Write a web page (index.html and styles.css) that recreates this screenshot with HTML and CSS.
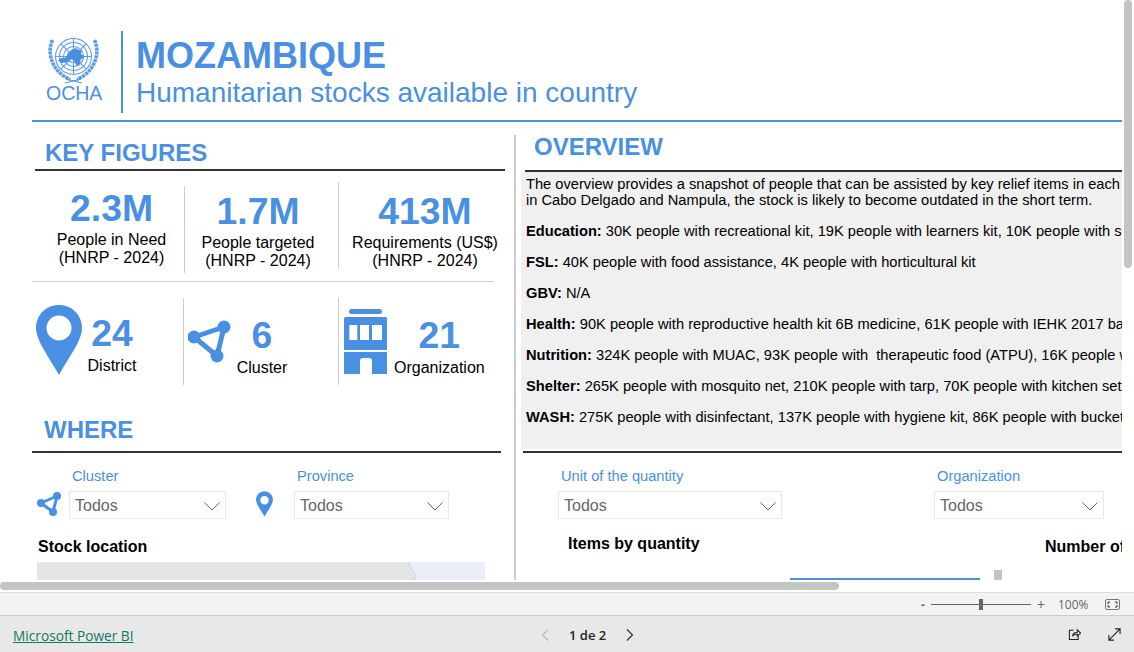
FILE: index.html
```html
<!DOCTYPE html>
<html lang="en">
<head>
<meta charset="utf-8">
<title>Mozambique - Humanitarian stocks</title>
<link rel="stylesheet" href="styles.css">
</head>
<body>
<main class="canvas">
  <header class="head">
    <div class="logo">
      <svg class="emblem" viewBox="0 0 52 46" width="52" height="46" aria-hidden="true">
        <g fill="none" stroke="#5e9ee6" stroke-width="1.100">
          <circle cx="25.500" cy="18.500" r="18"/><circle cx="25.500" cy="18.500" r="14"/><circle cx="25.500" cy="18.500" r="10"/><circle cx="25.500" cy="18.500" r="6"/>
          <path d="M25.500 .5V36.500M7.500 18.500H43.500M12.800 5.800 38.200 31.200M38.200 5.800 12.800 31.200"/>
        </g>
        <path fill="#4a90e2" d="M23 12l5-2 3 2 3 0-1 4 3 2 0 2-3 1-1 5-3 2-2-3-1-3-4-1-2 3-6 1-4-2 3-3 4 0 2-2 1-3 3-1z"/>
        <g fill="none" stroke="#5c9de6" stroke-width="3.600" stroke-dasharray="3.200 .7">
          <path d="M4.500 2C-2 16 5 34 22 41.500"/><path d="M46.500 2C53 16 46 34 29 41.500"/>
        </g>
        <path fill="none" stroke="#4a90e2" stroke-width="1" d="M17 45 33 41M34 45 18 41"/>
      </svg>
      <span class="ocha">OCHA</span>
    </div>
    <div class="titles">
      <h1>MOZAMBIQUE</h1>
      <p>Humanitarian stocks available in country</p>
    </div>
  </header>
  <div class="columns">
    <section class="left">
      <h2 class="sec-key">KEY FIGURES</h2>
      <div class="kpis">
        <div class="kpi kpi-a"><strong>2.3M</strong><span>People in Need<br>(HNRP - 2024)</span></div>
        <div class="kpi kpi-b"><strong>1.7M</strong><span>People targeted<br>(HNRP - 2024)</span></div>
        <div class="kpi kpi-c"><strong>413M</strong><span>Requirements (US$)<br>(HNRP - 2024)</span></div>
      </div>
      <div class="counts">
        <div class="count count-a">
          <svg viewBox="0 0 46 70" width="46" height="70" aria-hidden="true"><path fill="#4a90e2" fill-rule="evenodd" d="M23 0C10 0 0 10 0 23 0 36 15 55 23 70 31 55 46 36 46 23 46 10 36 0 23 0ZM23 10.500A12.500 12.500 0 1 1 23 35.500 12.500 12.500 0 0 1 23 10.500Z"/></svg>
          <div class="count-text"><strong>24</strong><span>District</span></div>
        </div>
        <div class="count count-b">
          <svg viewBox="0 0 44 44" width="44" height="44" aria-hidden="true"><g fill="#4a90e2"><circle cx="6" cy="17" r="6.500"/><circle cx="36" cy="7" r="6.500"/><circle cx="29" cy="36" r="6.500"/></g><path fill="none" stroke="#4a90e2" stroke-width="5" d="M6 17 36 7 29 36Z"/></svg>
          <div class="count-text"><strong>6</strong><span>Cluster</span></div>
        </div>
        <div class="count count-c">
          <svg viewBox="0 0 43 65" width="43" height="65" aria-hidden="true"><path fill="#4a90e2" fill-rule="evenodd" d="M7 0H36Q38 0 38 2.500 38 5 36 5H7Q5 5 5 2.500 5 0 7 0ZM1.500 8H41.500Q43 8 43 9.500V41H0V9.500Q0 8 1.500 8ZM5.300 16V31H13.300V16ZM16 16V31H25V16ZM28 16V31H38V16ZM0 43H43V65H28V52Q28 49 25 49H19Q16 49 16 52V65H0Z"/></svg>
          <div class="count-text"><strong>21</strong><span>Organization</span></div>
        </div>
      </div>
      <h2 class="sec-where">WHERE</h2>
      <div class="filters-left">
        <div class="filter filter-cluster">
          <svg class="f-icon" viewBox="0 0 24 24" width="24" height="24" aria-hidden="true"><g fill="#4a90e2"><circle cx="4" cy="11" r="4"/><circle cx="20" cy="4" r="4"/><circle cx="16" cy="20" r="4"/></g><path fill="none" stroke="#4a90e2" stroke-width="3" d="M4 11 20 4 16 20Z"/></svg>
          <div class="f-body"><label>Cluster</label>
            <div class="select"><span>Todos</span><svg viewBox="0 0 16 9" width="16" height="9" aria-hidden="true"><path fill="none" stroke="#666" d="M.5.500 8 8 15.500.500"/></svg></div></div>
        </div>
        <div class="filter filter-province">
          <svg class="f-icon" viewBox="0 0 18 27" width="17" height="26" aria-hidden="true"><path fill="#4a90e2" fill-rule="evenodd" d="M9 0C4 0 0 4 0 9 0 14 6 21 9 27 12 21 18 14 18 9 18 4 14 0 9 0ZM9 5A4.500 4.500 0 1 1 9 14 4.500 4.500 0 0 1 9 5Z"/></svg>
          <div class="f-body"><label>Province</label>
            <div class="select"><span>Todos</span><svg viewBox="0 0 16 9" width="16" height="9" aria-hidden="true"><path fill="none" stroke="#666" d="M.5.500 8 8 15.500.500"/></svg></div></div>
        </div>
      </div>
      <h3 class="stock-title">Stock location</h3>
      <div class="map">
        <svg viewBox="0 0 78 18" width="78" height="18" preserveAspectRatio="none" aria-hidden="true"><path fill="#e9eef8" d="M2 0H78V18H8C8 14 8 11 6 9 4 7 3 4 2 0Z"/><path fill="none" stroke="#c6d4e8" d="M2 0C3 4 4 7 6 9 8 11 8 14 8 18"/></svg>
      </div>
    </section>
    <section class="right">
      <h2 class="sec-over">OVERVIEW</h2>
      <div class="rule-over"></div>
      <div class="overview">
        <p>The overview provides a snapshot of people that can be assisted by key relief items in each cluster. With a particular focus on<br>in Cabo Delgado and Nampula, the stock is likely to become outdated in the short term.</p>
        <p><b>Education:</b> 30K people with recreational kit, 19K people with learners kit, 10K people with school kit</p>
        <p><b>FSL:</b> 40K people with food assistance, 4K people with horticultural kit</p>
        <p><b>GBV:</b> N/A</p>
        <p><b>Health:</b> 90K people with reproductive health kit 6B medicine, 61K people with IEHK 2017 basic kit</p>
        <p><b>Nutrition:</b> 324K people with MUAC, 93K people with &nbsp;therapeutic food (ATPU), 16K people with supplements</p>
        <p><b>Shelter:</b> 265K people with mosquito net, 210K people with tarp, 70K people with kitchen sets</p>
        <p><b>WASH:</b> 275K people with disinfectant, 137K people with hygiene kit, 86K people with bucket</p>
      </div>
      <div class="rule-right"></div>
      <div class="filters-right">
        <div class="f-body f-unit"><label>Unit of the quantity</label>
          <div class="select"><span>Todos</span><svg viewBox="0 0 16 9" width="16" height="9" aria-hidden="true"><path fill="none" stroke="#666" d="M.5.500 8 8 15.500.500"/></svg></div></div>
        <div class="f-body f-org"><label>Organization</label>
          <div class="select"><span>Todos</span><svg viewBox="0 0 16 9" width="16" height="9" aria-hidden="true"><path fill="none" stroke="#666" d="M.5.500 8 8 15.500.500"/></svg></div></div>
      </div>
      <div class="charts">
        <h3 class="items-title">Items by quantity</h3>
        <div class="legend"><i class="bar-blue"></i><i class="bar-grey"></i></div>
        <h3 class="number-title">Number of organizations</h3>
      </div>
    </section>
  </div>
  <div class="scroll-h"></div>
  <div class="scroll-v"></div>
</main>
<div class="zoombar">
  <span class="z-minus">-</span>
  <div class="slider"><i></i></div>
  <span class="z-plus">+</span>
  <span class="z-pct">100%</span>
  <svg viewBox="0 0 15 11" width="15" height="11" aria-hidden="true"><rect x=".5" y=".5" width="14" height="10" rx="1.500" fill="none" stroke="#777"/><path fill="none" stroke="#333" d="M3 5V3H5M10 3H12V5M12 6V8H10M5 8H3V6"/></svg>
</div>
<footer class="foot">
  <a class="pbi" href="#">Microsoft Power BI</a>
  <nav class="pager">
    <svg viewBox="0 0 8 12" width="8" height="12" aria-hidden="true"><path fill="none" stroke="#bbb" stroke-width="1.200" d="M7 .5 1.500 6 7 11.500"/></svg>
    <span>1 de 2</span>
    <svg viewBox="0 0 8 12" width="8" height="12" aria-hidden="true"><path fill="none" stroke="#333" stroke-width="1.200" d="M1 .5 6.500 6 1 11.500"/></svg>
  </nav>
  <div class="foot-icons">
    <svg viewBox="0 0 14 14" width="13" height="13" aria-hidden="true"><path fill="none" stroke="#222" stroke-width="1.100" d="M6 2.500H1.500V12.500H11V8M5 9C5 6 7 4.500 10 4.500V2L13.500 5.500 10 8.500V6.500C8 6.500 6 7 5 9Z"/></svg>
    <svg viewBox="0 0 14 14" width="13" height="13" aria-hidden="true"><path fill="none" stroke="#222" stroke-width="1.200" d="M1 13 13 1M7.500 1H13V6.500M1 7.500V13H6.500"/></svg>
  </div>
</footer>
</body>
</html>
```
FILE: styles.css
```css
* { box-sizing: border-box; }
html, body { margin: 0; padding: 0; height: 100%; overflow: hidden; }
body { width: 1134px; height: 652px; display: flex; flex-direction: column; font-family: "Liberation Sans", Arial, sans-serif; background: #fff; color: #000; }
h1, h2, h3, p { margin: 0; }
.canvas { position: relative; height: 592px; width: 1134px; overflow: hidden; background: #fff; padding-left: 32px; }

.head { width: 1090px; height: 91px; margin-top: 31px; border-bottom: 2px solid #4a90e2; display: flex; padding-left: 12px; }
.logo { width: 77px; padding-top: 7px; display: flex; flex-direction: column; align-items: flex-start; }
.emblem { margin-left: 4px; display: block; flex: none; }
.ocha { font-size: 19.500px; line-height: 20px; color: #4a90e2; margin: -1px 0 0 2px; }
.titles { height: 82px; border-left: 2px solid #4a90e2; padding: 5px 0 0 13px; color: #4a90e2; }
h1 { font-size: 36px; line-height: 40px; font-weight: 700; }
.titles p { font-size: 28px; line-height: 34px; }

.columns { display: flex; width: 1090px; height: 460px; }
.left { width: 484px; border-right: 2px solid #ccc; height: 445px; margin-top: 13px; flex: none; }
.right { flex: 1; min-width: 0; padding-left: 5px; }
h2 { font-size: 24px; line-height: 28px; font-weight: 700; color: #4a90e2; }
.sec-key { width: 470px; margin: 4px 0 0 3px; padding: 0 0 3px 10px; border-bottom: 2px solid #333; height: 32px; }

.kpis { display: flex; width: 462px; height: 111px; border-bottom: 1px solid #ccc; }
.kpi { display: flex; flex-direction: column; align-items: center; font-size: 16px; line-height: 18px; text-align: center; white-space: nowrap; }
.kpi strong { font-size: 37.330px; line-height: 40px; color: #4a90e2; margin-bottom: 3px; }
.kpi-a { width: 153px; border-right: 1px solid #ccc; margin-top: 15px; height: 87px; padding: 2px 0 0 7px; }
.kpi-b { width: 154px; border-right: 1px solid #ccc; margin-top: 11px; height: 87px; padding: 9px 7px 0 0; }
.kpi-c { width: 155px; margin-top: 11px; height: 87px; padding: 9px 0 0 17px; }

.counts { display: flex; height: 87px; margin-top: 16px; width: 462px; }
.count { display: flex; align-items: flex-start; }
.count-text { display: flex; flex-direction: column; align-items: center; font-size: 16px; line-height: 18px; }
.count-text strong { font-size: 37.330px; line-height: 40px; color: #4a90e2; margin-bottom: 4px; }
.count-a { width: 152px; border-right: 1px solid #ccc; padding: 7px 0 0 4px; }
.count-a .count-text { margin-left: 4px; width: 52px; padding-top: 8px; }
.count-b { width: 155px; border-right: 1px solid #ccc; padding: 17px 0 0 4px; }
.count-b svg { margin-top: 5px; }
.count-b .count-text { width: 60px; }
.count-c { width: 155px; padding: 10px 0 0 5px; }
.count-c svg { margin-top: 1px; }
.count-c .count-text { margin-left: 7px; padding-top: 7px; }

.sec-where { width: 469px; margin-top: 31px; padding: 0 0 6px 12px; border-bottom: 2px solid #333; height: 37px; }

.filters-left { display: flex; height: 66px; }
.filter { display: flex; align-items: flex-start; padding-top: 15px; }
.f-body label { display: block; font-size: 14.670px; line-height: 16px; color: #4a90e2; padding-left: 3px; }
.select { margin-top: 7px; height: 28px; border: 1px solid #e8e8e8; background: #fff; display: flex; align-items: center; justify-content: space-between; padding: 0 5px; color: #666; font-size: 16px; }
.select span { margin-top: 2px; }
.select svg { margin-top: 3px; }
.filter-cluster { width: 224px; flex: none; }
.filter-cluster .f-icon { margin: 24px 0 0 5px; }
.filter-cluster .f-body { margin-left: 8px; }
.filter-cluster .select { width: 157px; }
.filter-province .f-icon { margin-top: 23px; }
.filter-province .f-body { margin-left: 21px; }
.filter-province .select { width: 155px; }

.stock-title { font-size: 16px; line-height: 18px; margin: 19px 0 0 6px; font-weight: 700; }
.map { width: 448px; height: 18px; margin: 6px 0 0 5px; background: #e4e5e7; display: flex; justify-content: flex-end; }
.map svg { display: block; }

.sec-over { margin: 11px 0 0 13px; height: 37px; }
.rule-over { height: 2px; width: 597px; margin-left: 4px; background: #333; }
.overview { width: 601px; height: 277px; background: #f0f0f0; padding: 5px 0 0 5px; white-space: nowrap; overflow: hidden; font-size: 14.670px; line-height: 15.500px; }
.overview p { margin-bottom: 15.500px; }
.rule-right { width: 599px; height: 2px; background: #333; margin: 2px 0 0 2px; }
.filters-right { display: flex; padding-left: 37px; }
.f-unit { margin-top: 15px; width: 376px; }
.f-unit .select { width: 224px; }
.f-org { margin-top: 15px; }
.f-org .select { width: 170px; }
.charts { display: flex; width: 601px; overflow: hidden; height: 61px; }
.items-title { font-size: 16px; line-height: 18px; margin: 16px 0 0 47px; width: 222px; flex: none; font-weight: 700; }
.legend { flex: none; width: 255px; height: 61px; display: flex; align-items: flex-end; gap: 14px; }
.bar-blue { display: block; width: 190px; height: 2px; background: #4a90e2; }
.bar-grey { display: block; width: 8px; height: 10px; background: #c4c4c4; }
.number-title { font-size: 16px; line-height: 18px; margin-top: 19px; white-space: nowrap; flex: none; font-weight: 700; }

.scroll-h { position: absolute; left: 0; top: 582px; width: 839px; height: 8px; border-radius: 4px; background: #c4c4c4; }
.scroll-v { position: absolute; left: 1124px; top: 0; width: 8px; height: 268px; border-radius: 4px; background: #c4c4c4; }

.zoombar { height: 24px; background: #f3f3f3; border-top: 1px solid #e0e0e0; border-bottom: 1px solid #ccc; display: flex; align-items: center; padding-left: 921px; color: #666; font-family: "Open Sans", sans-serif; font-size: 12px; }
.z-minus { width: 10px; font-weight: 700; }
.slider { width: 100px; height: 1px; background: #666; position: relative; }
.slider i { position: absolute; left: 48px; top: -5px; width: 4px; height: 11px; background: #666; }
.z-plus { margin-left: 6px; width: 21px; font-size: 14px; }
.z-pct { width: 47px; font-size: 12px; }
.foot { flex: 1; background: #e8e8e8; display: flex; align-items: center; padding-left: 13px; font-family: "Open Sans", sans-serif; }
.pbi { color: #117865; font-size: 13.700px; text-decoration: underline; width: 528px; flex: none; margin-top: 3px; }
.pager { display: flex; align-items: center; gap: 20px; width: 100px; flex: none; font-size: 13px; font-weight: 600; color: #222; margin-top: 1px; }
.foot-icons { margin-left: 427px; display: flex; gap: 27px; }
```
